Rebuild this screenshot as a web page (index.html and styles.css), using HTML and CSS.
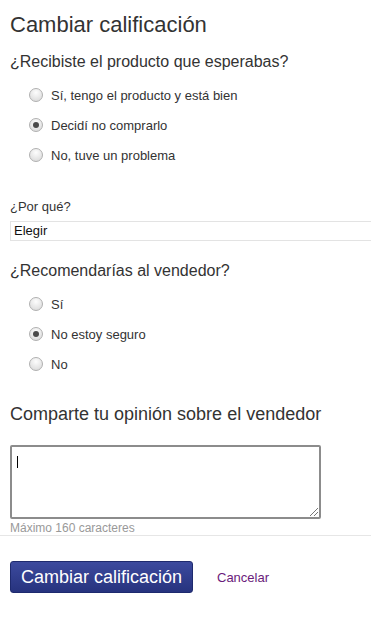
FILE: index.html
```html
<!DOCTYPE html>
<html lang="es">
<head>
<meta charset="utf-8">
<link rel="stylesheet" href="styles.css">
</head>
<body>
<div class="page">
  <h1 class="title">Cambiar calificación</h1>
  <h2 class="question">¿Recibiste el producto que esperabas?</h2>
  <div class="options">
    <label class="option"><span class="radio"></span>Sí, tengo el producto y está bien</label>
    <label class="option"><span class="radio checked"></span>Decidí no comprarlo</label>
    <label class="option"><span class="radio"></span>No, tuve un problema</label>
  </div>
  <div class="why">¿Por qué?</div>
  <div class="select">Elegir</div>
  <h2 class="question q2">¿Recomendarías al vendedor?</h2>
  <div class="options">
    <label class="option"><span class="radio"></span>Sí</label>
    <label class="option"><span class="radio checked"></span>No estoy seguro</label>
    <label class="option"><span class="radio"></span>No</label>
  </div>
  <h2 class="question q3">Comparte tu opinión sobre el vendedor</h2>
  <div class="textarea"><span class="caret"></span><span class="grip"></span></div>
  <div class="hint">Máximo 160 caracteres</div>
  <div class="divider"></div>
  <div class="actions">
    <button class="submit">Cambiar calificación</button>
    <a class="cancel">Cancelar</a>
  </div>
</div>
</body>
</html>
```
FILE: styles.css
```css
html, body { margin: 0; padding: 0; background: #fff; }
body { font-family: "Liberation Sans", Arial, sans-serif; color: #333; overflow: hidden; }
.page { padding: 0 0 0 10px; }
.title { font-size: 22px; font-weight: normal; margin: 0; padding-top: 11px; line-height: 28px; color: #333; }
.question { font-size: 16px; font-weight: normal; margin: 0; line-height: 22px; color: #333; }
.title + .question { margin-top: 12px; }
.options { display: flex; flex-direction: column; padding-left: 20px; margin-top: 7px; }
.option { display: flex; align-items: center; height: 30px; font-size: 13px; color: #333; }
.radio { width: 14px; height: 14px; margin-left: -1px; border-radius: 50%; border: 1px solid #b0b0b0; background: radial-gradient(circle at 50% 30%, #fdfdfd, #d6d6d6); margin-right: 8px; box-sizing: border-box; position: relative; }
.radio.checked::after { content: ""; position: absolute; left: 3px; top: 3px; width: 6px; height: 6px; border-radius: 50%; background: #4a4a4a; }
.why { font-size: 13px; margin-top: 29px; line-height: 16px; }
.select { margin-top: 6px; height: 20px; box-sizing: border-box; border: 1px solid #e3e3e3; border-right: none; font-size: 13px; color: #111; padding-left: 3px; line-height: 18px; margin-right: -2px; }
.q2 { margin-top: 19px; }
.q3 { margin-top: 24px; font-size: 18px; }
.textarea { margin-top: 20px; width: 311px; height: 74px; box-sizing: border-box; border: 2px solid #8c8c8c; border-radius: 2px; position: relative; }
.caret { position: absolute; left: 5px; top: 9px; width: 1px; height: 12px; background: #000; }
.grip { position: absolute; right: 1px; bottom: 1px; width: 8px; height: 8px; background: linear-gradient(135deg, transparent 45%, #777 45%, #777 52%, transparent 52%, transparent 70%, #777 70%, #777 77%, transparent 77%); }
.hint { font-size: 12px; color: #999; margin-top: 3px; line-height: 13px; }
.divider { height: 1px; background: #e6e6e6; margin-left: -10px; margin-top: 0; }
.actions { display: flex; align-items: center; margin-top: 25px; }
.submit { width: 183px; height: 32px; border-radius: 3px; border: 1px solid #1e2a6e; background: linear-gradient(#3c4a9e, #27337e); color: #fff; font-family: "Liberation Sans", Arial, sans-serif; font-size: 18px; padding: 0; }
.cancel { margin-left: 24px; font-size: 13px; color: #6a1b7b; }
```
